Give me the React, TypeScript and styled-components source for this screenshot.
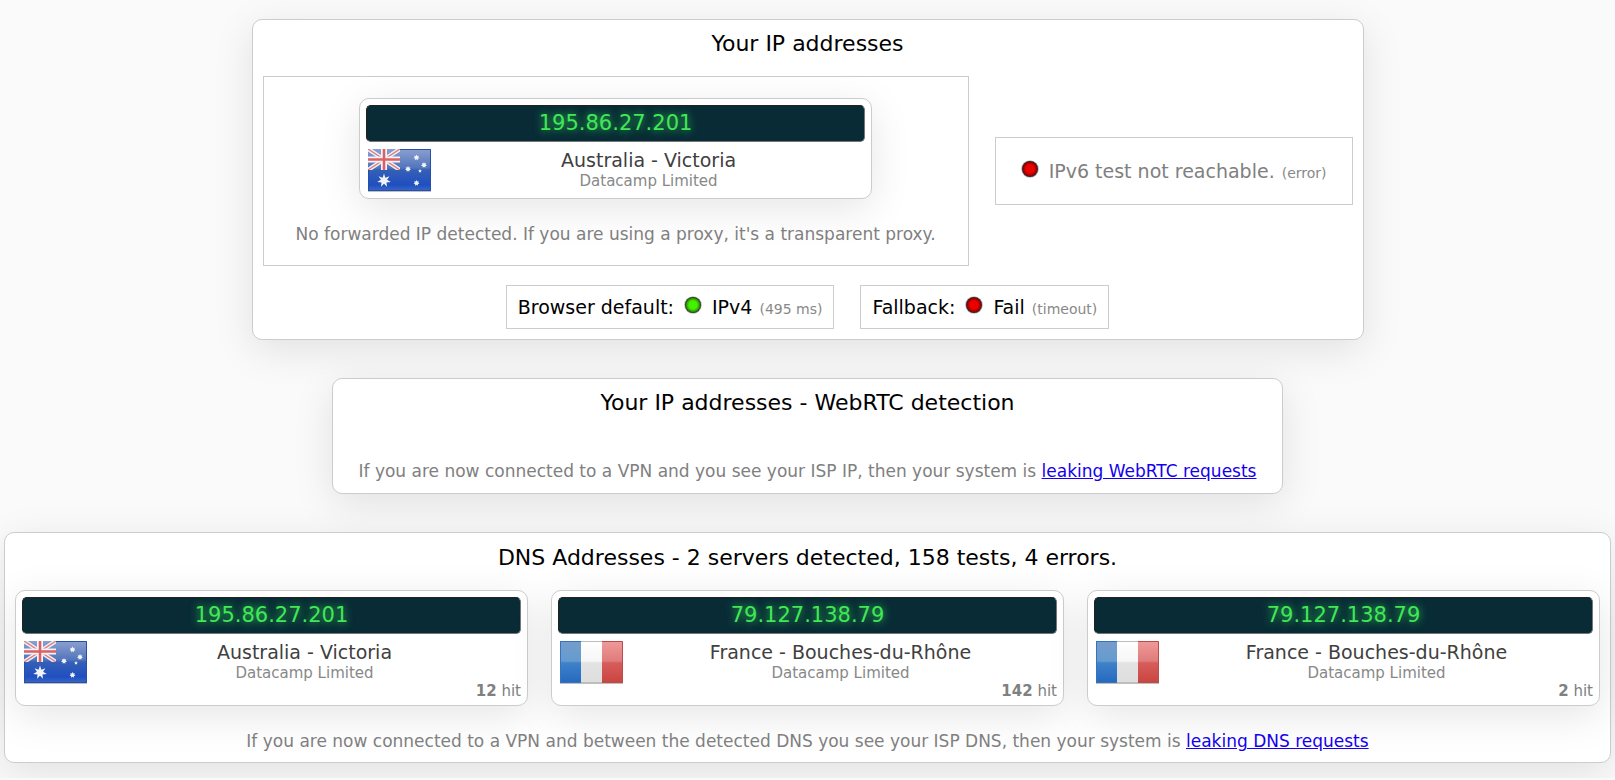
import React from "react";
import styled, { createGlobalStyle } from "styled-components";

const GlobalStyle = createGlobalStyle`
  body {
    margin: 0;
    background: #fafafa;
    color: #000;
    font-family: Verdana, "DejaVu Sans", sans-serif;
    font-size: 17px;
  }
`;

const Page = styled.main`
  display: flex;
  flex-direction: column;
  align-items: center;
  gap: 38px;
  padding: 19px 4px 15px;
`;

const Panel = styled.section<{ $wide?: boolean; $pad?: string }>`
  box-sizing: border-box;
  width: ${(p) => (p.$wide ? "100%" : "auto")};
  display: flex;
  flex-direction: column;
  align-items: center;
  padding: ${(p) => p.$pad ?? "10px"};
  background: #fff;
  border: 1px solid #ccc;
  border-radius: 10px;
  box-shadow: 0 10px 40px rgba(0, 0, 0, 0.1);
`;

const Title = styled.h2`
  margin: 0 0 18px;
  font-size: 22px;
  font-weight: 400;
  line-height: 28px;
`;

const Row = styled.div<{ $gap: number }>`
  display: flex;
  align-items: center;
  justify-content: center;
  align-self: stretch;
  gap: ${(p) => p.$gap}px;
`;

const Box = styled.div<{ $pad: string }>`
  display: flex;
  flex-direction: column;
  align-items: center;
  padding: ${(p) => p.$pad};
  border: 1px solid #ccc;
`;

const BoxRow = styled(Row)`
  margin-top: 19px;
`;

const Note = styled.p<{ $top: number }>`
  margin: ${(p) => p.$top}px 0 0;
  color: #808080;
  font-size: 17px;
  line-height: 20px;
`;

const Link = styled.a`
  color: #1400ee;
  text-decoration: underline;
`;

const Card = styled.article`
  box-sizing: border-box;
  flex: 1 1 0;
  width: 100%;
  max-width: 513px;
  padding: 6px;
  background: #fff;
  border: 1px solid #ccc;
  border-radius: 10px;
  box-shadow: 0 10px 40px rgba(0, 0, 0, 0.1);
`;

const Address = styled.div`
  box-sizing: border-box;
  height: 37px;
  border: 1px solid;
  border-color: #222 #777 #777 #222;
  border-radius: 5px;
  background: #082b36;
  color: #41e757;
  font-family: "DejaVu Sans", sans-serif;
  font-size: 21px;
  line-height: 35px;
  text-align: center;
  text-shadow: 0 0 8px #35d850;
`;

const Details = styled.div`
  display: flex;
  min-height: 43px;
  margin-top: 7px;
  padding-left: 2px;
`;

const Place = styled.div`
  flex: 1;
  text-align: center;
`;

const Country = styled.div`
  color: #404040;
  font-size: 19px;
  line-height: 23px;
`;

const Provider = styled.div`
  color: #888;
  font-size: 15px;
  line-height: 18px;
`;

const Hits = styled.div`
  color: #808080;
  font-size: 15px;
  line-height: 15px;
  text-align: right;
`;

const FlagSvg = styled.svg`
  display: block;
  flex: none;
`;

const Status = styled.div<{ $muted?: boolean }>`
  display: flex;
  align-items: center;
  color: ${(p) => (p.$muted ? "#808080" : "#000")};
  font-size: 19px;
  line-height: 24px;
  white-space: pre;
`;

const Small = styled.small`
  padding: 4px 0 0 7px;
  color: #888;
  font-size: 14px;
  line-height: 20px;
`;

const LedSvg = styled.svg<{ $leading?: boolean }>`
  flex: none;
  margin: 0 10px 4px ${(p) => (p.$leading ? 0 : 10)}px;
`;

function Led({ color, leading }: { color: "green" | "red"; leading?: boolean }) {
  const id = `led-${color}`;
  const [bright, deep] = color === "green" ? ["#45f000", "#2d9e00"] : ["#ec0000", "#a00000"];
  return (
    <LedSvg $leading={leading} width="18" height="18" viewBox="0 0 18 18" aria-hidden="true">
      <defs>
        <radialGradient id={id}>
          <stop offset="0.5" stopColor={bright} />
          <stop offset="0.8" stopColor={deep} />
          <stop offset="1" stopColor="#222" />
        </radialGradient>
      </defs>
      <circle cx="9" cy="9" r="8.8" fill="#b8b8b8" />
      <circle cx="9" cy="9" r="8" fill={`url(#${id})`} />
    </LedSvg>
  );
}

function star(cx: number, cy: number, r: number, points: number, inner: number) {
  return Array.from({ length: points * 2 }, (_, i) => {
    const a = (Math.PI * i) / points - Math.PI / 2;
    const d = i % 2 ? r * inner : r;
    return `${(cx + d * Math.cos(a)).toFixed(2)},${(cy + d * Math.sin(a)).toFixed(2)}`;
  }).join(" ");
}

type FlagCode = "au" | "fr";

function Flag({ code }: { code: FlagCode }) {
  const canton = `canton-${code}`;
  return (
    <FlagSvg width="64" height="43" viewBox="0 0 64 43" role="img" aria-label={code.toUpperCase()}>
      <defs>
        <linearGradient id="au-blue" x1="0" y1="0" x2="0" y2="1">
          <stop offset="0" stopColor="#8ba0d0" />
          <stop offset="0.45" stopColor="#5375bd" />
          <stop offset="0.5" stopColor="#3560b6" />
          <stop offset="0.85" stopColor="#1f4fc0" />
          <stop offset="1" stopColor="#3a68ca" />
        </linearGradient>
        <linearGradient id="fr-blue" x1="0" y1="0" x2="0" y2="1">
          <stop offset="0" stopColor="#769dca" />
          <stop offset="0.48" stopColor="#659bd0" />
          <stop offset="0.52" stopColor="#3f82c8" />
          <stop offset="1" stopColor="#2469c0" />
        </linearGradient>
        <linearGradient id="fr-white" x1="0" y1="0" x2="0" y2="1">
          <stop offset="0" stopColor="#fff" />
          <stop offset="0.48" stopColor="#f6f6f6" />
          <stop offset="0.52" stopColor="#e3e3e3" />
          <stop offset="1" stopColor="#dedede" />
        </linearGradient>
        <linearGradient id="fr-red" x1="0" y1="0" x2="0" y2="1">
          <stop offset="0" stopColor="#f09a9a" />
          <stop offset="0.48" stopColor="#df7c7a" />
          <stop offset="0.52" stopColor="#d65d5b" />
          <stop offset="1" stopColor="#c9453f" />
        </linearGradient>
        <clipPath id={canton}>
          <rect width="32" height="21" />
        </clipPath>
      </defs>
      {code === "au" ? (
        <>
          <rect width="63" height="42" fill="url(#au-blue)" />
          <g clipPath={`url(#${canton})`}>
            <path d="M0 0 32 21M32 0 0 21" stroke="#eef0f6" strokeWidth="4.2" />
            <path d="M0 0 32 21M32 0 0 21" stroke="#dd7c7c" strokeWidth="1.4" />
            <path d="M16 0V21M0 10.5H32" stroke="#f4f4f8" strokeWidth="6" />
            <path d="M16 0V21M0 10.5H32" stroke="#d96264" strokeWidth="2.6" />
          </g>
          <g fill="#f1f3f7">
            <polygon points={star(16, 31.5, 7, 7, 0.45)} />
            <polygon points={star(48.5, 8.5, 3, 7, 0.6)} />
            <polygon points={star(56, 16, 3, 7, 0.6)} />
            <polygon points={star(40, 20, 3, 7, 0.6)} />
            <polygon points={star(52, 22, 2, 5, 0.5)} />
            <polygon points={star(48.5, 34, 3, 7, 0.6)} />
          </g>
          <path d="M32 .5H62.5V41.5H.5V21" fill="none" stroke="#2450a8" />
        </>
      ) : (
        <>
          <rect width="21" height="42" fill="url(#fr-blue)" />
          <rect x="21" width="21" height="42" fill="url(#fr-white)" />
          <rect x="42" width="21" height="42" fill="url(#fr-red)" />
          <path d="M21 .5H.5V41.5H21" fill="none" stroke="#3473bd" />
          <path d="M21 .5H42M21 41.5H42" stroke="#bdbdbd" />
          <path d="M42 .5H62.5V41.5H42" fill="none" stroke="#bd4b4b" />
        </>
      )}
      <path d="M0 42.5H63" stroke="#000" strokeOpacity="0.25" />
    </FlagSvg>
  );
}

interface Server {
  ip: string;
  flag: FlagCode;
  place: string;
  hits?: number;
}

function AddressCard({ ip, flag, place, hits }: Server) {
  return (
    <Card>
      <Address>{ip}</Address>
      <Details>
        <Flag code={flag} />
        <Place>
          <Country>{place}</Country>
          <Provider>Datacamp Limited</Provider>
        </Place>
      </Details>
      {hits !== undefined && (
        <Hits>
          <b>{hits}</b> hit
        </Hits>
      )}
    </Card>
  );
}

const servers: Server[] = [
  { ip: "195.86.27.201", flag: "au", place: "Australia - Victoria", hits: 12 },
  { ip: "79.127.138.79", flag: "fr", place: "France - Bouches-du-Rhône", hits: 142 },
  { ip: "79.127.138.79", flag: "fr", place: "France - Bouches-du-Rhône", hits: 2 },
];

export default function App() {
  return (
    <>
      <GlobalStyle />
      <Page>
        <Panel>
          <Title>Your IP addresses</Title>
          <Row $gap={26}>
            <Box $pad="21px 32px">
              <AddressCard ip="195.86.27.201" flag="au" place="Australia - Victoria" />
              <Note $top={25}>
                No forwarded IP detected. If you are using a proxy, it's a transparent proxy.
              </Note>
            </Box>
            <Box $pad="21px 25px">
              <Status $muted>
                <Led color="red" leading />
                IPv6 test not reachable.
                <Small>(error)</Small>
              </Status>
            </Box>
          </Row>
          <BoxRow $gap={26}>
            <Box $pad="9px 11px">
              <Status>
                Browser default:
                <Led color="green" />
                IPv4
                <Small>(495 ms)</Small>
              </Status>
            </Box>
            <Box $pad="9px 11px">
              <Status>
                Fallback:
                <Led color="red" />
                Fail
                <Small>(timeout)</Small>
              </Status>
            </Box>
          </BoxRow>
        </Panel>

        <Panel $pad="10px 26px 12px">
          <Title>Your IP addresses - WebRTC detection</Title>
          <Note $top={26}>
            If you are now connected to a VPN and you see your ISP IP, then your system is{" "}
            <Link href="#webrtc">leaking WebRTC requests</Link>
          </Note>
        </Panel>

        <Panel $wide $pad="11px 10px">
          <Title>DNS Addresses - 2 servers detected, 158 tests, 4 errors.</Title>
          <Row $gap={23}>
            {servers.map((server, i) => (
              <AddressCard key={i} {...server} />
            ))}
          </Row>
          <Note $top={25}>
            If you are now connected to a VPN and between the detected DNS you see your ISP DNS,
            then your system is <Link href="#dns">leaking DNS requests</Link>
          </Note>
        </Panel>
      </Page>
    </>
  );
}
